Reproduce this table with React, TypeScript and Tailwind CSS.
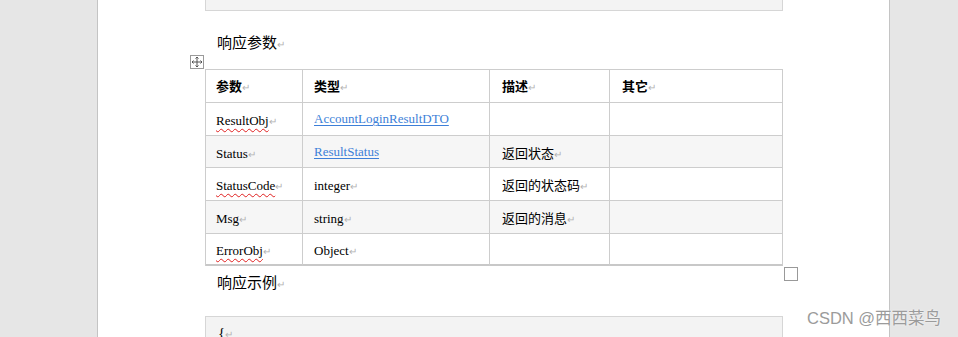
import React from 'react'

type Cell = { text?: string; link?: boolean; wavy?: boolean; cjk?: boolean }

const colWidths = ['w-[97px] pl-[10px]', 'w-[187px] pl-[11px]', 'w-[120px] pl-[12px]', 'w-[173px] pl-[12px]']

const rows: { cells: Cell[]; h: string; shade?: boolean; last?: boolean }[] = [
  {
    h: 'h-[33px]',
    cells: [{ text: 'ResultObj', wavy: true }, { text: 'AccountLoginResultDTO', link: true }, {}, {}],
  },
  {
    h: 'h-[32px]',
    shade: true,
    cells: [{ text: 'Status' }, { text: 'ResultStatus', link: true }, { text: '返回状态', cjk: true }, {}],
  },
  {
    h: 'h-[33px]',
    cells: [{ text: 'StatusCode', wavy: true }, { text: 'integer' }, { text: '返回的状态码', cjk: true }, {}],
  },
  {
    h: 'h-[33px]',
    shade: true,
    cells: [{ text: 'Msg' }, { text: 'string' }, { text: '返回的消息', cjk: true }, {}],
  },
  {
    h: 'h-[32px]',
    last: true,
    cells: [{ text: 'ErrorObj', wavy: true }, { text: 'Object' }, {}, {}],
  },
]

const serif = "font-['Liberation_Serif','Noto_Sans_CJK_SC',serif]"
const cjk = "font-['Noto_Sans_CJK_SC',sans-serif]"

function Mark() {
  return <span className={`text-[10px] text-[#b3b3b3] ${cjk}`}>↵</span>
}

function CellText({ cell }: { cell: Cell }) {
  if (!cell.text) return null
  if (cell.link) {
    return <span className={`${serif} text-[13px] text-[#3d7fd8] underline underline-offset-2`}>{cell.text}</span>
  }
  return (
    <span className="whitespace-nowrap">
      <span
        className={`${cell.cjk ? cjk : serif} text-[13px] text-black ${
          cell.wavy ? 'underline decoration-wavy decoration-[#e02020] decoration-1 underline-offset-[3px]' : ''
        }`}
      >
        {cell.text}
      </span>
      <Mark />
    </span>
  )
}

export default function App() {
  return (
    <div className="relative flex h-[337px] w-[958px] overflow-hidden bg-[#e6e6e6]">
      <div className="w-[98px] shrink-0 border-r border-[#c4c4c4] bg-[#e6e6e6]" />

      <div className="w-[791px] shrink-0 bg-white pl-[107px]">
        {/* previous code block tail */}
        <div className="h-[11px] w-[578px] border-x border-b border-[#d6d6d6] bg-[#f3f3f3]" />

        <div className={`pt-[23px] pl-[12px] text-[15px] leading-[16px] text-black ${cjk}`}>
          响应参数<Mark />
        </div>

        <div className="relative mt-[17px] w-[578px] border-l border-t border-[#cdcdcd]">
          {/* table move handle */}
          <div className="absolute -left-[16px] -top-[15px] flex h-[14px] w-[14px] items-center justify-center border border-[#9a9a9a] bg-white">
            <svg width="12" height="12" viewBox="0 0 12 12" fill="none" stroke="#555" strokeWidth="1">
              <path d="M6 1v10M1 6h10" />
              <path d="M4.5 2.5L6 1l1.5 1.5M4.5 9.5L6 11l1.5-1.5M2.5 4.5L1 6l1.5 1.5M9.5 4.5L11 6l-1.5 1.5" />
            </svg>
          </div>
          {/* table resize handle */}
          <div className="absolute -right-[15px] -bottom-[15px] h-[14px] w-[14px] border border-[#999] bg-white" />

          <div className="flex h-[33px]">
            {['参数', '类型', '描述', '其它'].map((t, i) => (
              <div key={t} className={`${colWidths[i]} flex items-center border-b border-r border-[#cdcdcd]`}>
                <span className={`${cjk} text-[13px] font-bold text-black`}>{t}</span>
                <Mark />
              </div>
            ))}
          </div>

          {rows.map((row, r) => (
            <div key={r} className={`flex ${row.h} ${row.shade ? 'bg-[#f6f6f6]' : 'bg-white'}`}>
              {row.cells.map((cell, i) => (
                <div
                  key={i}
                  className={`${colWidths[i]} flex items-center border-r border-[#cdcdcd] ${
                    row.last ? 'border-b-2 border-b-[#c8c8c8]' : 'border-b'
                  }`}
                >
                  <CellText cell={cell} />
                </div>
              ))}
            </div>
          ))}
        </div>

        <div className={`pt-[8px] pl-[12px] text-[15px] leading-[16px] text-black ${cjk}`}>
          响应示例<Mark />
        </div>

        <div className="mt-[24px] h-[40px] w-[578px] border border-[#d6d6d6] bg-[#f3f3f3] pt-[7px] pl-[12px] leading-[16px]">
          <span className={`${serif} text-[15px] text-black`}>{'{'}</span>
          <Mark />
        </div>
      </div>

      <div className="flex-1 border-l border-[#c4c4c4] bg-[#e6e6e6]" />

      <div
        className={`absolute left-[807px] top-[308px] text-[16.5px] leading-[20px] text-[#9b9b9b] [text-shadow:0_0_2px_#fff] ${"font-['Liberation_Sans','Noto_Sans_CJK_SC',sans-serif]"}`}
      >
        CSDN @西西菜鸟
      </div>
    </div>
  )
}
